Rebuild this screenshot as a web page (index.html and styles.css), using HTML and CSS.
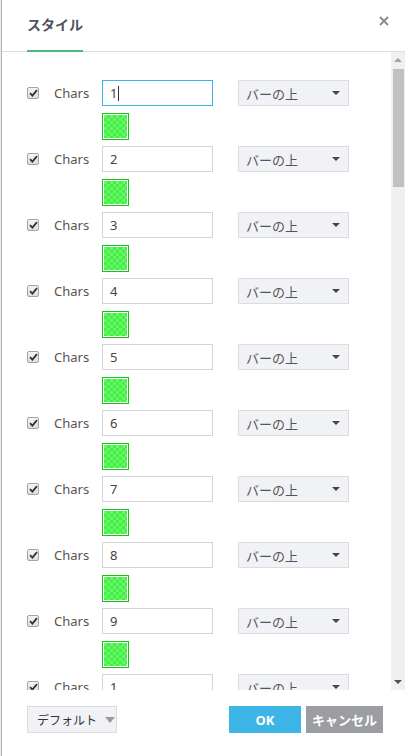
FILE: index.html
```html
<!DOCTYPE html>
<html lang="ja">
<head>
    <meta charset="UTF-8">
    <meta name="viewport" content="width=device-width, initial-scale=1.0">
    <title>スタイル</title>
    <link rel="stylesheet" href="styles.css">
</head>
<body>
    <div class="dialog">
        <header class="dialog-header">
            <div class="tab">スタイル</div>
            <button class="close" aria-label="close">
                <svg width="10" height="10" viewBox="0 0 10 10"><path d="M1 1 L9 9 M9 1 L1 9" stroke="#8a8a8a" stroke-width="1.8" fill="none"/></svg>
            </button>
        </header>

        <div class="dialog-body">
            <div class="list">
                <div class="item">
                    <div class="line">
                        <span class="check"><svg width="9" height="8" viewBox="0 0 9 8"><path d="M1 4.2 L3.4 6.6 L8 1.2" stroke="#333" stroke-width="1.8" fill="none"/></svg></span>
                        <span class="label">Chars</span>
                        <div class="field focused">1<span class="caret"></span></div>
                        <div class="select">バーの上<span class="arrow"></span></div>
                    </div>
                    <div class="swatch"></div>
                </div>
                <div class="item">
                    <div class="line">
                        <span class="check"><svg width="9" height="8" viewBox="0 0 9 8"><path d="M1 4.2 L3.4 6.6 L8 1.2" stroke="#333" stroke-width="1.8" fill="none"/></svg></span>
                        <span class="label">Chars</span>
                        <div class="field">2</div>
                        <div class="select">バーの上<span class="arrow"></span></div>
                    </div>
                    <div class="swatch"></div>
                </div>
                <div class="item">
                    <div class="line">
                        <span class="check"><svg width="9" height="8" viewBox="0 0 9 8"><path d="M1 4.2 L3.4 6.6 L8 1.2" stroke="#333" stroke-width="1.8" fill="none"/></svg></span>
                        <span class="label">Chars</span>
                        <div class="field">3</div>
                        <div class="select">バーの上<span class="arrow"></span></div>
                    </div>
                    <div class="swatch"></div>
                </div>
                <div class="item">
                    <div class="line">
                        <span class="check"><svg width="9" height="8" viewBox="0 0 9 8"><path d="M1 4.2 L3.4 6.6 L8 1.2" stroke="#333" stroke-width="1.8" fill="none"/></svg></span>
                        <span class="label">Chars</span>
                        <div class="field">4</div>
                        <div class="select">バーの上<span class="arrow"></span></div>
                    </div>
                    <div class="swatch"></div>
                </div>
                <div class="item">
                    <div class="line">
                        <span class="check"><svg width="9" height="8" viewBox="0 0 9 8"><path d="M1 4.2 L3.4 6.6 L8 1.2" stroke="#333" stroke-width="1.8" fill="none"/></svg></span>
                        <span class="label">Chars</span>
                        <div class="field">5</div>
                        <div class="select">バーの上<span class="arrow"></span></div>
                    </div>
                    <div class="swatch"></div>
                </div>
                <div class="item">
                    <div class="line">
                        <span class="check"><svg width="9" height="8" viewBox="0 0 9 8"><path d="M1 4.2 L3.4 6.6 L8 1.2" stroke="#333" stroke-width="1.8" fill="none"/></svg></span>
                        <span class="label">Chars</span>
                        <div class="field">6</div>
                        <div class="select">バーの上<span class="arrow"></span></div>
                    </div>
                    <div class="swatch"></div>
                </div>
                <div class="item">
                    <div class="line">
                        <span class="check"><svg width="9" height="8" viewBox="0 0 9 8"><path d="M1 4.2 L3.4 6.6 L8 1.2" stroke="#333" stroke-width="1.8" fill="none"/></svg></span>
                        <span class="label">Chars</span>
                        <div class="field">7</div>
                        <div class="select">バーの上<span class="arrow"></span></div>
                    </div>
                    <div class="swatch"></div>
                </div>
                <div class="item">
                    <div class="line">
                        <span class="check"><svg width="9" height="8" viewBox="0 0 9 8"><path d="M1 4.2 L3.4 6.6 L8 1.2" stroke="#333" stroke-width="1.8" fill="none"/></svg></span>
                        <span class="label">Chars</span>
                        <div class="field">8</div>
                        <div class="select">バーの上<span class="arrow"></span></div>
                    </div>
                    <div class="swatch"></div>
                </div>
                <div class="item">
                    <div class="line">
                        <span class="check"><svg width="9" height="8" viewBox="0 0 9 8"><path d="M1 4.2 L3.4 6.6 L8 1.2" stroke="#333" stroke-width="1.8" fill="none"/></svg></span>
                        <span class="label">Chars</span>
                        <div class="field">9</div>
                        <div class="select">バーの上<span class="arrow"></span></div>
                    </div>
                    <div class="swatch"></div>
                </div>
                <div class="item">
                    <div class="line">
                        <span class="check"><svg width="9" height="8" viewBox="0 0 9 8"><path d="M1 4.2 L3.4 6.6 L8 1.2" stroke="#333" stroke-width="1.8" fill="none"/></svg></span>
                        <span class="label">Chars</span>
                        <div class="field">1</div>
                        <div class="select">バーの上<span class="arrow"></span></div>
                    </div>
                    <div class="swatch"></div>
                </div>
            </div>

            <!-- fake scrollbar -->
            <div class="scrollbar">
                <div class="sb-btn"><span class="sb-up"></span></div>
                <div class="sb-track"><div class="sb-thumb"></div></div>
                <div class="sb-btn"><span class="sb-down"></span></div>
            </div>
        </div>

        <footer class="dialog-footer">
            <button class="btn-default">デフォルト<span class="arrow light"></span></button>
            <div class="actions">
                <button class="btn-ok">OK</button>
                <button class="btn-cancel">キャンセル</button>
            </div>
        </footer>
    </div>
</body>
</html>
```

FILE: styles.css
```css
html, body {
    margin: 0;
    padding: 0;
    height: 100%;
}

body {
    font-family: 'Noto Sans', 'Noto Sans CJK JP', sans-serif;
    background-color: #e9e9e9;
    color: #333;
}

.dialog {
    margin-left: 1px;
    height: 756px;
    border-left: 1px solid #b4b4b4;
    background-color: #fff;
    display: flex;
    flex-direction: column;
    box-sizing: border-box;
}

.dialog-header {
    height: 52px;
    border-bottom: 1px solid #dcdcdc;
    box-sizing: border-box;
    display: flex;
    justify-content: space-between;
    align-items: flex-end;
    padding: 0 16px 0 25px;
    flex-shrink: 0;
}

.tab {
    font-size: 14px;
    font-weight: bold;
    color: #4b535f;
    line-height: 20px;
    white-space: nowrap;
    padding-bottom: 15px;
    border-bottom: 2px solid #50b883;
    width: 56px;
    margin-bottom: -1px;
}

.close {
    border: none;
    background: none;
    padding: 0;
    margin-bottom: 25px;
    cursor: pointer;
    display: flex;
}

.dialog-body {
    flex: 1;
    display: flex;
    overflow: hidden;
}

.list {
    flex: 1;
    overflow: hidden;
    padding: 28px 0 0 25px;
}

.item {
    display: flex;
    flex-direction: column;
}

.line {
    display: flex;
    align-items: center;
    height: 26px;
}

.check {
    width: 12px;
    height: 12px;
    box-sizing: border-box;
    border: 1px solid #a4a4a4;
    border-radius: 2px;
    background: linear-gradient(#f4f4f4, #dedede);
    display: flex;
    align-items: center;
    justify-content: center;
    margin-right: 15px;
}

.label {
    width: 48px;
    font-size: 13px;
    color: #555;
}

.field {
    width: 111px;
    height: 26px;
    box-sizing: border-box;
    border: 1px solid #d4d4d4;
    padding: 0 7px;
    font-size: 13px;
    color: #444;
    line-height: 24px;
    display: flex;
    align-items: center;
    margin-right: 25px;
}

.field.focused {
    border-color: #3cb4e5;
}

.caret {
    width: 1px;
    height: 15px;
    background-color: #333;
    margin-left: 1px;
}

.select {
    width: 111px;
    height: 26px;
    box-sizing: border-box;
    border: 1px solid #dadce2;
    background-color: #f1f2f6;
    padding: 0 7px;
    font-size: 13px;
    color: #555;
    display: flex;
    align-items: center;
    justify-content: space-between;
}

.arrow {
    width: 0;
    height: 0;
    border-left: 4px solid transparent;
    border-right: 4px solid transparent;
    border-top: 4px solid #444;
    margin-right: 1px;
}

.arrow.light {
    border-left-width: 5px;
    border-right-width: 5px;
    border-top: 6px solid #9a9a9a;
    margin: 0 0 0 8px;
}

.swatch {
    width: 27px;
    height: 27px;
    box-sizing: border-box;
    margin: 7px 0 6px 75px;
    border: 1px solid #1bc21b;
    padding: 1px;
    background-color: #fff;
    background-clip: content-box;
    background-image: conic-gradient(#46ed46 25%, #66f766 0 50%, #46ed46 0 75%, #66f766 0);
    background-size: 6px 6px;
    background-origin: content-box;
}

.scrollbar {
    width: 14px;
    background-color: #f0f0f0;
    display: flex;
    flex-direction: column;
    flex-shrink: 0;
}

.sb-btn {
    height: 16px;
    display: flex;
    align-items: center;
    justify-content: center;
}

.sb-up {
    border-left: 4px solid transparent;
    border-right: 4px solid transparent;
    border-bottom: 4px solid #a3a3a3;
}

.sb-down {
    border-left: 4px solid transparent;
    border-right: 4px solid transparent;
    border-top: 4px solid #505050;
}

.sb-track {
    flex: 1;
    padding: 1px 1px 0 2px;
}

.sb-thumb {
    height: 118px;
    background-color: #c1c1c1;
}

.dialog-footer {
    height: 66px;
    flex-shrink: 0;
    display: flex;
    justify-content: space-between;
    align-items: flex-start;
    padding: 16px 22px 0 25px;
    box-sizing: border-box;
}

.dialog-footer button {
    height: 27px;
    border: none;
    font-family: inherit;
    font-size: 13px;
    cursor: pointer;
    padding: 0;
}

.btn-default {
    width: 90px;
    background-color: #f1f2f6;
    border: 1px solid #dadce2 !important;
    color: #333;
    font-size: 12px !important;
    display: flex;
    align-items: center;
    padding-left: 9px !important;
}

.actions {
    display: flex;
    gap: 5px;
}

.btn-ok {
    width: 72px;
    background-color: #3db5e6;
    color: #fff;
    font-weight: bold;
}

.btn-cancel {
    width: 77px;
    background-color: #9b9da3;
    color: #fff;
    font-weight: bold;
}
```
